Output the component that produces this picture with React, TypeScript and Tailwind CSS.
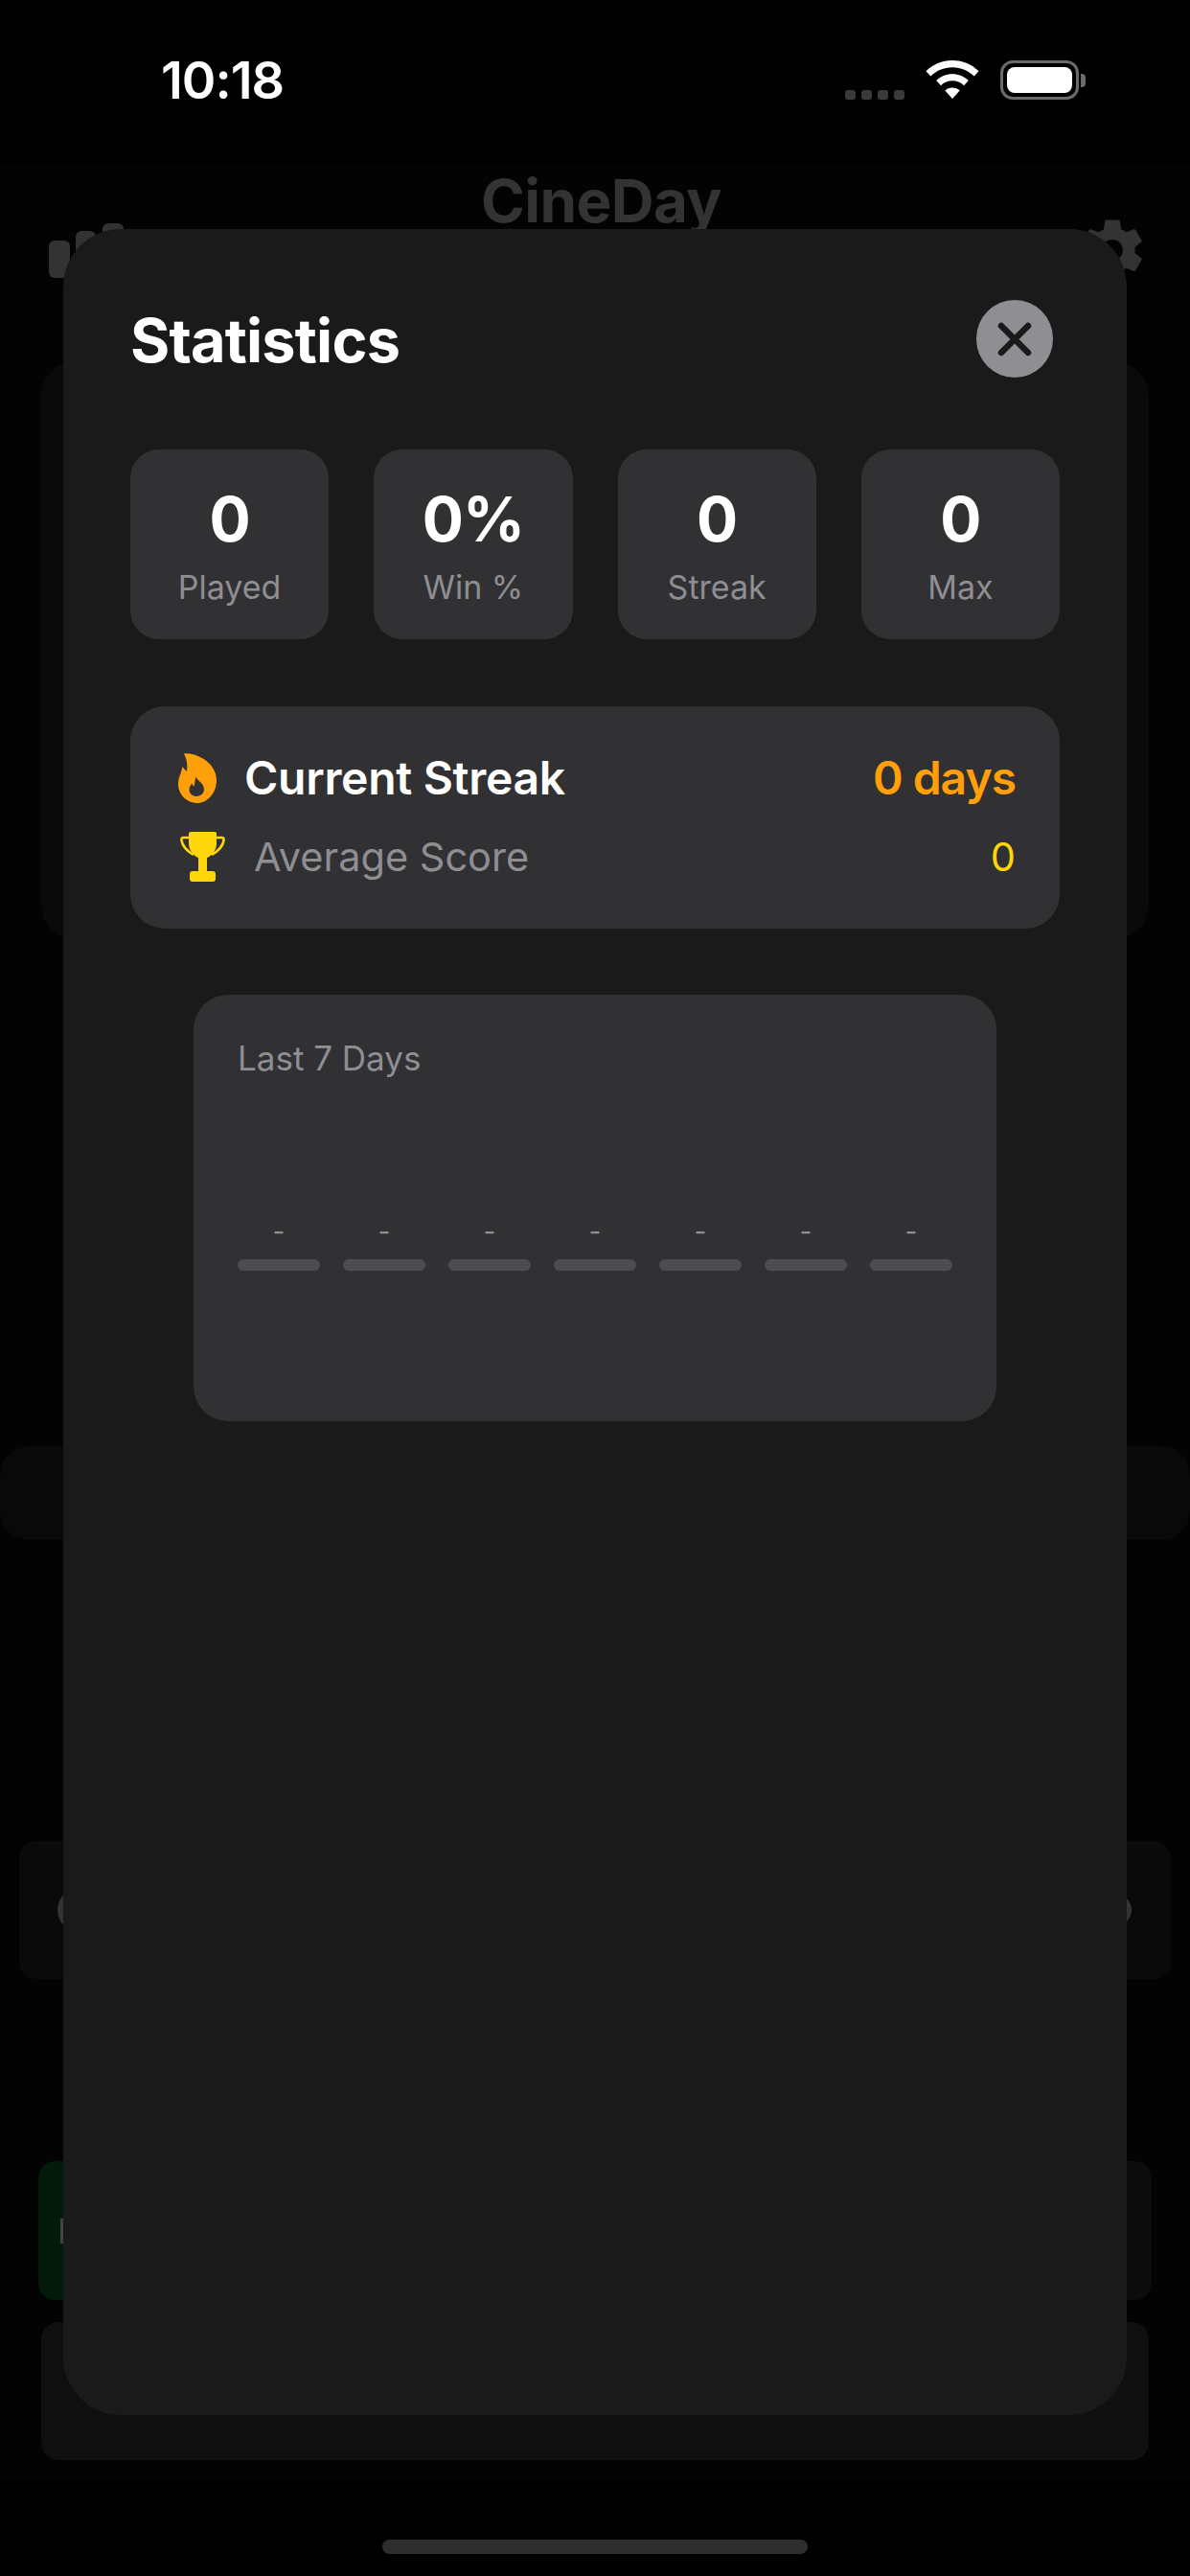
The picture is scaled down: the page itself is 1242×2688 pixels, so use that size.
import React from "react";
import { IoSettingsSharp } from "react-icons/io5";

const stats = [
  ["0", "Played"],
  ["0%", "Win %"],
  ["0", "Streak"],
  ["0", "Max"],
];

function Wifi() {
  return (
    <svg width="56" height="41" viewBox="0 0 56 41" fill="#fff">
      <path d="M28 0C39 0 48.500 4.300 55.500 11.300L50.700 16.500C44.800 10.700 36.800 7.200 28 7.200C19.200 7.200 11.200 10.700 5.300 16.500L0.500 11.300C7.500 4.300 17 0 28 0Z" />
      <path d="M28 14.200C34.500 14.200 40.400 16.800 44.800 21.100L40 26.200C36.900 23.200 32.700 21.300 28 21.300C23.300 21.300 19.100 23.200 16 26.200L11.200 21.100C15.600 16.800 21.500 14.200 28 14.200Z" />
      <path d="M28 28.500C31 28.500 33.700 29.600 35.700 31.500L28 40L20.300 31.500C22.300 29.600 25 28.500 28 28.500Z" />
    </svg>
  );
}

function Battery() {
  return (
    <div className="flex items-center gap-[2px]">
      <div className="h-[41px] w-[82px] rounded-[13px] border-[3px] border-[#6a6a6a] p-[4px]">
        <div className="h-full w-full rounded-[8px] bg-white" />
      </div>
      <div className="h-[14px] w-[5px] rounded-r-[4px] bg-[#6a6a6a]" />
    </div>
  );
}

function Flame() {
  return (
    <svg width="40" height="52" viewBox="0 0 40 52" fill="#ff9f0a">
      <path
        fillRule="evenodd"
        d="M6 0.500C7 0 10 0 12 0.500C27 3 40 14 40 28C40 42 30 52 20 52C9 52 0 43 0 32C0 26 3 21 4.500 14C6 16 7.500 18 9 19C10 12 9 6 6 0.500ZM18.500 24.500C20 29 27 31 27 38C27 42 23 45 19 45C15 45 11.500 42 11.500 38.500C11.500 35 13 33 14.500 31.500C15 33 15.500 34 16.500 34.500C17.500 31 17.500 27.500 18.500 24.500Z"
      />
    </svg>
  );
}

function Trophy() {
  return (
    <svg width="47" height="52" viewBox="0 0 47 52" fill="#ffd60a">
      <path d="M9 2C9 0.500 10 0 12 0H35C37 0 38 0.500 38 2V12C38 20 32 26 27 27.500H20C15 26 9 20 9 12Z" />
      <rect x="19" y="25" width="9" height="18" />
      <rect x="10" y="41" width="27" height="11" rx="3" />
      <path
        d="M10 6H3.500C1.800 6 1.200 7 1.500 9C2.500 16 9 21 14 24M37 6H43.500C45.200 6 45.800 7 45.500 9C44.500 16 38 21 33 24"
        fill="none"
        stroke="#ffd60a"
        strokeWidth="2.600"
      />
    </svg>
  );
}

function Bars() {
  return (
    <svg width="78" height="57" viewBox="0 0 78 57" fill="#333333">
      <rect x="0" y="18" width="22" height="39" rx="6" />
      <rect x="28" y="8" width="21" height="49" rx="6" />
      <rect x="56" y="0" width="22" height="57" rx="6" />
    </svg>
  );
}

function StatusBar() {
  return (
    <div className="flex h-[170px] items-start justify-between pl-[168px] pr-[109px] pt-[53px]">
      <span className="text-[54px] leading-[62px] font-semibold tracking-[-1px] text-white">10:18</span>
      <div className="flex items-end gap-[22px] pt-[10px]">
        <div className="flex gap-[6px]">
          <div className="h-[10px] w-[11px] rounded-[3px] bg-[#3a3a3a]" />
          <div className="h-[10px] w-[11px] rounded-[3px] bg-[#3a3a3a]" />
          <div className="h-[10px] w-[11px] rounded-[3px] bg-[#3a3a3a]" />
          <div className="h-[10px] w-[11px] rounded-[3px] bg-[#3a3a3a]" />
        </div>
        <Wifi />
        <Battery />
      </div>
    </div>
  );
}

function Backdrop() {
  return (
    <div className="flex h-[2419px] flex-col bg-[#030303]">
      <div className="flex h-[207px] items-start justify-between pl-[51px] pr-[46px] pt-[4px]">
        <div className="mt-[59px]">
          <Bars />
        </div>
        <span className="text-[62px] leading-[72px] font-bold tracking-[-0.6px] text-[#333333]">CineDay</span>
        <IoSettingsSharp className="mt-[52px] text-[#333333]" size={70} />
      </div>
      <div className="mx-[43px] h-[603px] rounded-[36px] bg-[#0a0a0a]" />
      <div className="mt-[529px] h-[98px] rounded-[30px] bg-[#090909]" />
      <div className="mx-[20px] mt-[314px] flex h-[144px] items-center justify-between rounded-[18px] bg-[#0a0a0a] pl-[40px] pr-[41px]">
        <div className="h-[46px] w-[46px] rounded-full bg-[#333333]" />
        <div className="h-[32px] w-[32px] rounded-full bg-[#333333]" />
      </div>
      <div className="mx-[40px] mt-[190px] flex h-[145px] gap-[10px]">
        <div className="flex w-[500px] items-center rounded-[18px] bg-[#041a0b] pl-[23px]">
          <div className="h-[26px] w-[4px] bg-[#444444]" />
        </div>
        <div className="flex-1 rounded-[18px] bg-[#0c0c0c]" />
      </div>
      <div className="mx-[43px] mt-[23px] h-[144px] rounded-[18px] bg-[#0f0f0f]" />
    </div>
  );
}

function StatsModal() {
  return (
    <div className="absolute left-[66px] top-[239px] h-[2281px] w-[1110px] rounded-[60px] bg-[#1a1a1a] px-[70px] pt-[74px]">
      <div className="flex h-[81px] items-center justify-between pr-[7px]">
        <span className="pt-[3px] text-[63px] font-bold tracking-[-0.8px] text-white">Statistics</span>
        <div className="flex h-[81px] w-[80px] items-center justify-center rounded-full bg-[#8e8e93]">
          <svg width="36" height="36" viewBox="0 0 36 36" stroke="#1a1a1a" strokeWidth="6.500" strokeLinecap="round">
            <path d="M4 4L32 32M32 4L4 32" />
          </svg>
        </div>
      </div>
      <div className="mt-[75px] grid grid-cols-4 gap-[47px]">
        {stats.map(([value, label]) => (
          <div key={label} className="flex h-[198px] flex-col items-center rounded-[30px] bg-[#313133] pt-[34px]">
            <span className="text-[64px] leading-[78px] font-bold tracking-[-1px] text-white">{value}</span>
            <span className="mt-[11px] text-[34px] leading-[42px] text-[#8e8e93]">{label}</span>
          </div>
        ))}
      </div>
      <div className="mt-[70px] flex h-[232px] flex-col justify-center rounded-[36px] bg-[#313133] pl-[50px] pr-[46px]">
        <div className="flex h-[60px] items-center justify-between">
          <div className="flex items-center gap-[29px]">
            <Flame />
            <span className="text-[48px] font-semibold tracking-[-0.3px] text-white">Current Streak</span>
          </div>
          <span className="text-[48px] font-semibold tracking-[-1px] text-[#ff9f0a]">0 days</span>
        </div>
        <div className="mt-[22px] flex h-[60px] items-center justify-between">
          <div className="ml-[2px] flex items-center gap-[30px]">
            <Trophy />
            <span className="text-[41.500px] text-[#8e8e93]">Average Score</span>
          </div>
          <span className="text-[41.500px] text-[#ffd60a]">0</span>
        </div>
      </div>
      <div className="mx-[66px] mt-[69px] flex h-[445px] flex-col rounded-[36px] bg-[#313133] px-[46px] pt-[45px]">
        <span className="text-[35px] leading-[42px] text-[#8e8e93]">Last 7 Days</span>
        <div className="mt-[143px] grid grid-cols-7 gap-[24px]">
          {[0, 1, 2, 3, 4, 5, 6].map((i) => (
            <div key={i} className="flex flex-col items-center">
              <span className="text-[28px] leading-[34px] text-[#8e8e93]">-</span>
              <div className="mt-[12px] h-[12px] w-full rounded-[6px] bg-[#4d4d50]" />
            </div>
          ))}
        </div>
      </div>
    </div>
  );
}

export default function App() {
  return (
    <div className="relative flex h-[2688px] w-[1242px] flex-col overflow-hidden bg-black font-['Inter',sans-serif]">
      <StatusBar />
      <Backdrop />
      <div className="flex flex-1 items-start justify-center pt-[61px]">
        <div className="h-[15px] w-[444px] rounded-[8px] bg-[#2e2e2e]" />
      </div>
      <StatsModal />
    </div>
  );
}
